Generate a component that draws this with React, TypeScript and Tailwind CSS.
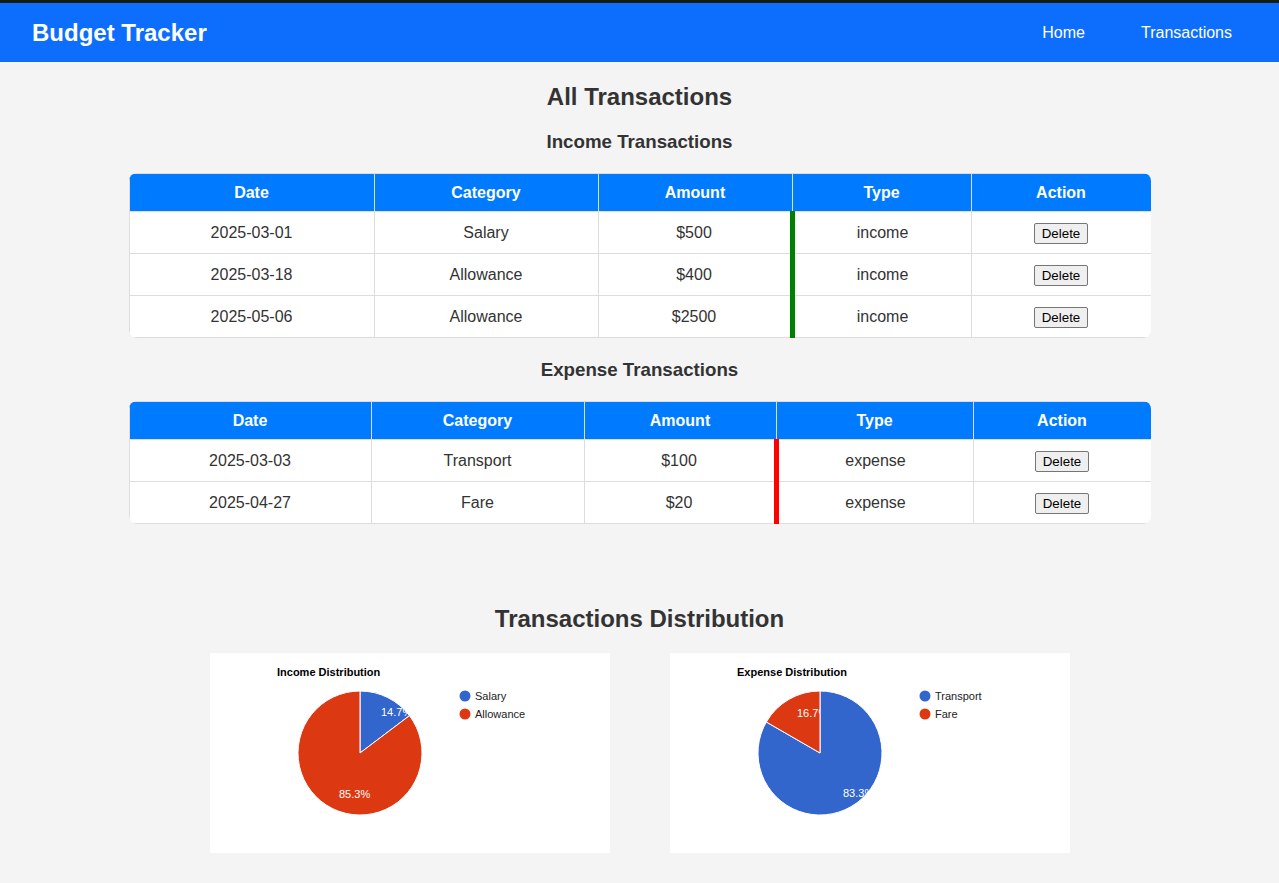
import React from 'react'

type Row = { date: string; category: string; amount: string; type: string }

const income: Row[] = [
  { date: '2025-03-01', category: 'Salary', amount: '$500', type: 'income' },
  { date: '2025-03-18', category: 'Allowance', amount: '$400', type: 'income' },
  { date: '2025-05-06', category: 'Allowance', amount: '$2500', type: 'income' },
]

const expense: Row[] = [
  { date: '2025-03-03', category: 'Transport', amount: '$100', type: 'expense' },
  { date: '2025-04-27', category: 'Fare', amount: '$20', type: 'expense' },
]

const headers = ['Date', 'Category', 'Amount', 'Type', 'Action']

function TxTable({ rows, widths, kind }: { rows: Row[]; widths: number[]; kind: 'income' | 'expense' }) {
  return (
    <div className="w-[1022px] mx-auto rounded-[8px] overflow-hidden bg-white">
      <table className="w-full table-fixed border-collapse text-[16px] text-[#333]">
        <colgroup>
          {widths.map((w, i) => (
            <col key={i} style={{ width: w }} />
          ))}
        </colgroup>
        <thead>
          <tr>
            {headers.map((h) => (
              <th key={h} className="h-[38px] p-0 bg-[#007bff] text-white font-bold border border-[#ddd] text-center">
                {h}
              </th>
            ))}
          </tr>
        </thead>
        <tbody>
          {rows.map((r, i) => (
            <tr key={i}>
              <td className="h-[42px] p-0 border border-[#ddd] text-center">{r.date}</td>
              <td className="h-[42px] p-0 border border-[#ddd] text-center">{r.category}</td>
              <td className="h-[42px] p-0 border border-[#ddd] text-center">{r.amount}</td>
              <td
                className={
                  kind === 'income'
                    ? 'h-[42px] p-0 border border-[#ddd] border-l-[5px] border-l-[#008000] text-center'
                    : 'h-[42px] p-0 border border-[#ddd] border-l-[5px] border-l-[#ff0000] text-center'
                }
              >
                {r.type}
              </td>
              <td className="h-[42px] p-0 border border-[#ddd] text-center">
                <button className="bg-[#efefef] border border-[#767676] rounded-[2px] px-[7px] py-[2px] text-[13.33px] leading-[15px] text-black">
                  Delete
                </button>
              </td>
            </tr>
          ))}
        </tbody>
      </table>
    </div>
  )
}

type Slice = { label: string; color: string; path: string; text: string; tx: number; ty: number }

function PieChart({ id, title, slices }: { id: string; title: string; slices: Slice[] }) {
  return (
    <div className="w-[400px] h-[200px] bg-white">
      <svg width="400" height="200" viewBox="0 0 400 200" fontFamily="Liberation Sans, Arial, sans-serif">
        <text x="67" y="23" fontSize="11" fontWeight="bold" fill="#000">
          {title}
        </text>
        <defs>
          {slices.map((s, i) => (
            <clipPath key={i} id={`${id}-clip-${i}`}>
              <path d={s.path} />
            </clipPath>
          ))}
        </defs>
        {slices.map((s, i) => (
          <path key={i} d={s.path} fill={s.color} stroke="#fff" strokeWidth="1" />
        ))}
        {slices.map((s, i) => (
          <text key={i} x={s.tx} y={s.ty} fontSize="11" fill="#fff" clipPath={`url(#${id}-clip-${i})`}>
            {s.text}
          </text>
        ))}
        {slices.map((s, i) => (
          <g key={i}>
            <circle cx="255" cy={43 + i * 18} r="5.5" fill={s.color} />
            <text x="265" y={47 + i * 18} fontSize="11" fill="#222">
              {s.label}
            </text>
          </g>
        ))}
      </svg>
    </div>
  )
}

export default function App() {
  return (
    <div className="min-h-[883px] bg-[#f4f4f4] font-['Liberation_Sans',Arial,sans-serif] text-[#333]">
      <div className="h-[3px] bg-[#0d1f10]" />
      <nav className="h-[59px] bg-[#0d6efd] flex items-center justify-between pl-[32px] pr-[47px]">
        <h1 className="text-[24px] font-bold text-white leading-[29px]">Budget Tracker</h1>
        <div className="flex gap-[56px] text-[16px] text-white">
          <a>Home</a>
          <a>Transactions</a>
        </div>
      </nav>

      <main className="pb-[30px]">
        <h2 className="mt-[21px] text-[24px] leading-[28px] font-bold text-center">All Transactions</h2>
        <h3 className="mt-[20px] mb-[20px] text-[18.72px] leading-[22px] font-bold text-center">Income Transactions</h3>
        <TxTable rows={income} widths={[245, 224, 194, 179, 180]} kind="income" />
        <h3 className="mt-[21px] mb-[20px] text-[18.72px] leading-[22px] font-bold text-center">Expense Transactions</h3>
        <TxTable rows={expense} widths={[242, 213, 192, 197, 178]} kind="expense" />

        <h2 className="mt-[81px] mb-[20px] text-[24px] leading-[28px] font-bold text-center">Transactions Distribution</h2>
        <div className="flex justify-center gap-[60px]">
          <PieChart
            id="incomePie"
            title="Income Distribution"
            slices={[
              {
                label: 'Salary',
                color: '#3366cc',
                path: 'M150,100 L150,38 A62,62 0 0 1 199.47,62.63 Z',
                text: '14.7%',
                tx: 171,
                ty: 63,
              },
              {
                label: 'Allowance',
                color: '#dc3912',
                path: 'M150,100 L199.47,62.63 A62,62 0 1 1 150,38 Z',
                text: '85.3%',
                tx: 129,
                ty: 145,
              },
            ]}
          />
          <PieChart
            id="expensePie"
            title="Expense Distribution"
            slices={[
              {
                label: 'Transport',
                color: '#3366cc',
                path: 'M150,100 L150,38 A62,62 0 1 1 96.31,69 Z',
                text: '83.3%',
                tx: 173,
                ty: 144,
              },
              {
                label: 'Fare',
                color: '#dc3912',
                path: 'M150,100 L96.31,69 A62,62 0 0 1 150,38 Z',
                text: '16.7%',
                tx: 127,
                ty: 64,
              },
            ]}
          />
        </div>
      </main>
    </div>
  )
}
